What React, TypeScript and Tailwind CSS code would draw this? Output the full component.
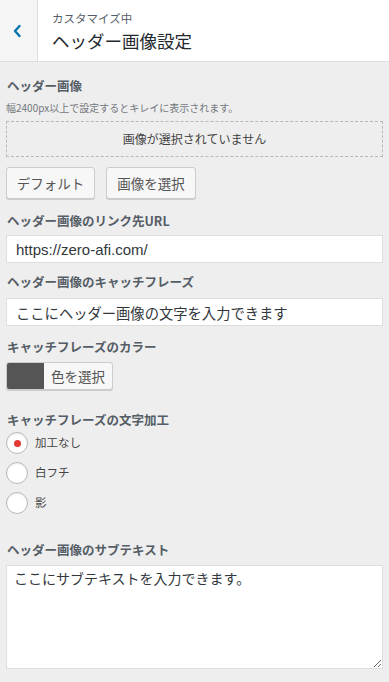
import React, { useState } from 'react';

const jp = { fontFamily: '"Noto Sans CJK JP", "Noto Sans", sans-serif' };

const Label: React.FC<{ children: React.ReactNode; className?: string }> = ({ children, className = '' }) => (
  <div className={`text-[12.5px] font-bold leading-[18px] text-[#555d66] ${className}`}>{children}</div>
);

const App: React.FC = () => {
  const [effect, setEffect] = useState('none');
  const [url, setUrl] = useState('https://zero-afi.com/');
  const [catchPhrase, setCatchPhrase] = useState('ここにヘッダー画像の文字を入力できます');
  const [subText, setSubText] = useState('ここにサブテキストを入力できます。');

  const options = [
    { value: 'none', label: '加工なし' },
    { value: 'border', label: '白フチ' },
    { value: 'shadow', label: '影' },
  ];

  return (
    <div className="min-h-[682px] w-[389px] bg-[#eeeeee] text-[#32373c]" style={jp}>
      {/* ヘッダー */}
      <div className="flex h-[62px] border-b border-[#dddddd] bg-white">
        <button className="flex w-[38px] items-center justify-center border-r border-[#dddddd] bg-[#f5f5f5] pr-[3px] text-[#0073aa]">
          <svg width="10" height="14" viewBox="0 0 10 14" fill="none">
            <path d="M7.5 2 L3 7 L7.5 12" stroke="currentColor" strokeWidth="2.4" strokeLinecap="round" strokeLinejoin="round" />
          </svg>
        </button>
        <div className="flex flex-col justify-center pl-[14px] pt-[1px]">
          <span className="text-[11.5px] leading-[16px] text-[#555d66]">カスタマイズ中</span>
          <span className="mt-[3px] text-[17.5px] leading-[24px] text-[#23282d]">ヘッダー画像設定</span>
        </div>
      </div>

      <div className="px-[6px] pt-[15px] pb-[12px]">
        {/* ヘッダー画像 */}
        <Label className="pl-[1px]">ヘッダー画像</Label>
        <div className="mt-[6px] text-[10px] leading-[14px] text-[#72777c]">幅2400px以上で設定するとキレイに表示されます。</div>
        <div className="mt-[6px] flex h-[36px] items-center justify-center border border-dashed border-[#b4b9be] text-[12px] text-[#444]">
          画像が選択されていません
        </div>
        <div className="mt-[10px] flex gap-[11px]">
          <button className="h-[32px] w-[89px] rounded-[3px] border border-[#cccccc] bg-[#f7f7f7] text-[13.5px] text-[#555] shadow-[0_1px_0_#cccccc]">デフォルト</button>
          <button className="h-[32px] w-[90px] rounded-[3px] border border-[#cccccc] bg-[#f7f7f7] text-[13.5px] text-[#555] shadow-[0_1px_0_#cccccc]">画像を選択</button>
        </div>

        {/* リンク先URL */}
        <Label className="mt-[13px] pl-[1px]">ヘッダー画像のリンク先URL</Label>
        <input
          value={url}
          onChange={(e) => setUrl(e.target.value)}
          className="mt-[5px] block h-[28px] w-full border border-[#dddddd] bg-white px-[9px] text-[15px] text-[#32373c] outline-none"
          style={{ fontFamily: '"Liberation Sans", "Noto Sans CJK JP", sans-serif' }}
        />

        {/* キャッチフレーズ */}
        <Label className="mt-[10px] pl-[1px]">ヘッダー画像のキャッチフレーズ</Label>
        <input
          value={catchPhrase}
          onChange={(e) => setCatchPhrase(e.target.value)}
          className="mt-[7px] block h-[28px] w-full border border-[#dddddd] bg-white px-[9px] text-[14.3px] text-[#32373c] outline-none"
          style={jp}
        />

        {/* カラー */}
        <Label className="mt-[12px] pl-[1px]">キャッチフレーズのカラー</Label>
        <button className="mt-[6px] flex h-[28px] w-[107px] overflow-hidden rounded-[3px] border border-[#cccccc] bg-[#f7f7f7] shadow-[0_1px_0_#cccccc]">
          <span className="h-full w-[37px] bg-[#555555]" />
          <span className="flex flex-1 items-center justify-center text-[13.5px] text-[#555]">色を選択</span>
        </button>

        {/* 文字加工 */}
        <Label className="mt-[21px] pl-[1px]">キャッチフレーズの文字加工</Label>
        <div className="mt-[3px] flex flex-col gap-[8px]">
          {options.map((o) => (
            <label key={o.value} className="flex cursor-pointer items-center gap-[7px]" onClick={() => setEffect(o.value)}>
              <span className="flex h-[22px] w-[22px] items-center justify-center rounded-full border border-[#b4b9be] bg-white shadow-[inset_0_1px_2px_rgba(0,0,0,0.07)]">
                {effect === o.value && <span className="h-[7px] w-[7px] rounded-full bg-[#e53935]" />}
              </span>
              <span className="text-[11.5px] text-[#444]">{o.label}</span>
            </label>
          ))}
        </div>

        {/* サブテキスト */}
        <Label className="mt-[27px] pl-[1px]">ヘッダー画像のサブテキスト</Label>
        <textarea
          value={subText}
          onChange={(e) => setSubText(e.target.value)}
          className="mt-[6px] block h-[104px] w-full resize-y border border-[#dddddd] bg-white px-[7px] py-[1px] text-[14px] leading-[22px] text-[#32373c] outline-none"
          style={jp}
        />
      </div>
    </div>
  );
};

export default App;
